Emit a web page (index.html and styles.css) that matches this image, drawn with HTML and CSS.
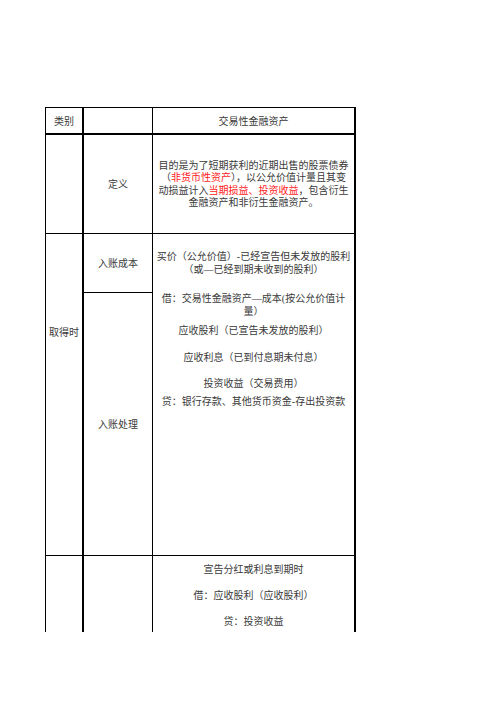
FILE: index.html
```html
<!DOCTYPE html>
<html lang="zh-CN">
<head>
<meta charset="utf-8">
<title>交易性金融资产</title>
<link rel="stylesheet" href="styles.css">
</head>
<body>
<div class="sheet">
  <div class="cell c1 hd">类别</div>
  <div class="cell c2 hd"></div>
  <div class="cell c3 hd">交易性金融资产</div>

  <div class="cell c1 rb"></div>
  <div class="cell c2 rb mid">定义</div>
  <div class="cell c3 rb mid">
    <div class="para">目的是为了短期获利的近期出售的股票债券<br>（<span class="red">非货币性资产</span>），以公允价值计量且其变<br>动损益计入<span class="red">当期损益、投资收益</span>，包含衍生<br>金融资产和非衍生金融资产。</div>
  </div>

  <div class="cell c1 rb span2 top-t">取得时</div>
  <div class="cell c2 rb mid">入账成本</div>
  <div class="cell c3 rb span2 lines">
    <div class="ln l1">买价（公允价值）-已经宣告但未发放的股利</div>
    <div class="ln">（或—已经到期未收到的股利）</div>
    <div class="ln l3">借：交易性金融资产—成本(按公允价值计</div>
    <div class="ln">量）</div>
    <div class="ln l5">应收股利（已宣告未发放的股利）</div>
    <div class="ln l6">应收利息（已到付息期未付息）</div>
    <div class="ln l7">投资收益（交易费用）</div>
    <div class="ln l8">贷：银行存款、其他货币资金-存出投资款</div>
  </div>
  <div class="cell c2 rb mid">入账处理</div>

  <div class="cell c1"></div>
  <div class="cell c2"></div>
  <div class="cell c3 lines last">
    <div class="ln">宣告分红或利息到期时</div>
    <div class="ln gap">借：应收股利（应收股利）</div>
    <div class="ln gap">贷：投资收益</div>
  </div>
</div>
</body>
</html>
```

FILE: styles.css
```css
html, body {
  margin: 0;
  padding: 0;
  background: #fff;
}

body {
  font-family: "Liberation Serif", "Noto Sans CJK SC", serif;
  font-size: 10px;
  color: #3a3a3a;
}

.sheet {
  display: grid;
  grid-template-columns: 38px 69px 203px;
  grid-template-rows: 27px 99px 59px 263px 76px;
  width: max-content;
  margin: 107px 0 0 45px;
  border-top: 1px solid #000;
  border-left: 1px solid #000;
}

.cell {
  box-sizing: border-box;
  text-align: center;
  line-height: 13px;
}

.c1 { border-right: 2px solid #000; }
.c2 { border-right: 1px solid #000; }
.c3 { border-right: 2px solid #000; padding: 0 3px; }

.hd {
  border-bottom: 2px solid #000;
  display: flex;
  align-items: center;
  justify-content: center;
  padding-top: 1px;
}

.rb { border-bottom: 1px solid #000; }

.mid {
  display: flex;
  align-items: center;
  justify-content: center;
}

.span2 { grid-row: span 2; }

.top-t { padding-top: 92px; }

.para {
  line-height: 12.5px;
  padding-top: 1px;
  white-space: nowrap;
}

.red { color: #ff1a1a; }

.lines {
  display: flex;
  flex-direction: column;
  align-items: center;
}

.ln { white-space: nowrap; }

.l1 { margin-top: 16px; }
.l3 { margin-top: 16px; }
.l5 { margin-top: 6px; }
.l6 { margin-top: 14px; }
.l7 { margin-top: 13px; }
.l8 { margin-top: 5px; }

.last { padding-top: 7px; }
.gap { margin-top: 13px; }
```
